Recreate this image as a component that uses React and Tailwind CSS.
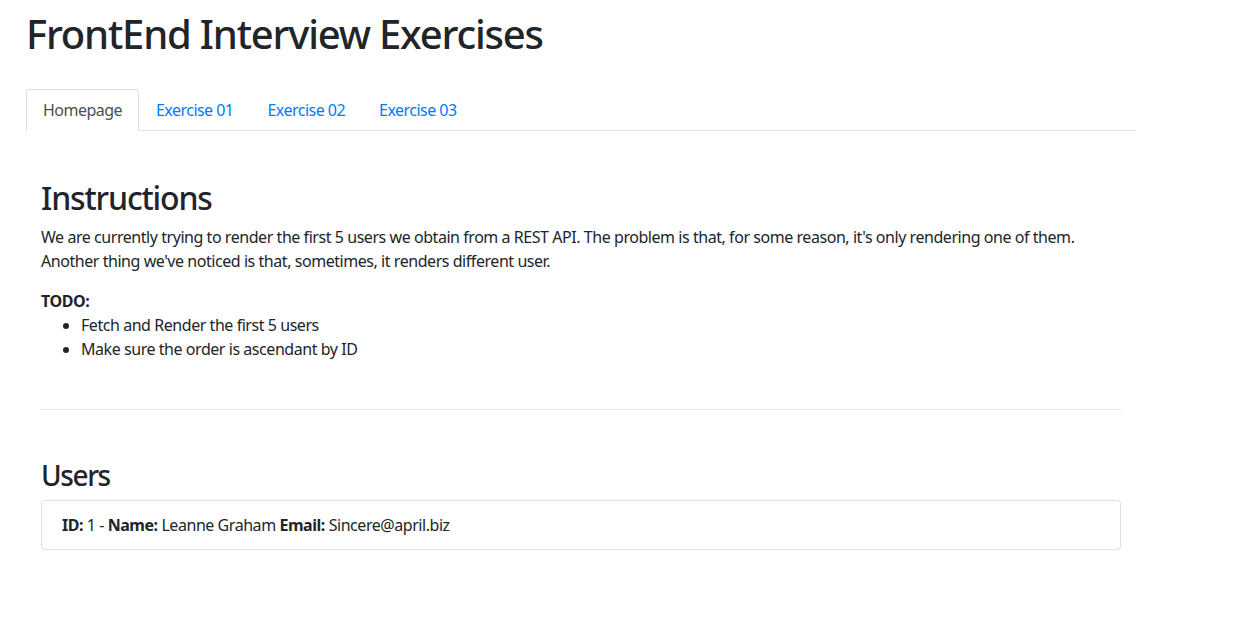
const users = [{ id: 1, name: 'Leanne Graham', email: 'Sincere@april.biz' }];

const tabs = ['Homepage', 'Exercise 01', 'Exercise 02', 'Exercise 03'];

export default function App() {
  return (
    <div className="min-h-screen bg-white text-[#212529] font-['Noto_Sans',sans-serif]">
      <div className="w-[1110px] ml-[26px]">
        <h1 className="pt-[10px] text-[40px] leading-[48px] font-medium tracking-[-0.03em]">FrontEnd Interview Exercises</h1>

        <ul className="mt-[31px] flex border-b border-[#dee2e6] tracking-[-0.033em]">
          {tabs.map((tab, i) => (
            <li key={tab} className="-mb-px">
              <a
                href="#"
                className={
                  i === 0
                    ? 'block px-4 py-2 text-base leading-6 text-[#495057] bg-white border border-[#dee2e6] border-b-white rounded-t'
                    : 'block px-4 py-2 text-base leading-6 text-[#007bff] border border-transparent'
                }
              >
                {tab}
              </a>
            </li>
          ))}
        </ul>

        <div className="px-[15px] pt-[48px] text-base leading-6 tracking-[-0.028em]">
          <h2 className="text-[32px] leading-[38px] font-medium mb-2 tracking-[-0.036em]">Instructions</h2>
          <p className="mb-4">
            We are currently trying to render the first 5 users we obtain from a REST API. The problem is that, for some reason, it's only rendering one of them. Another thing we've noticed is that, sometimes, it renders different user.
          </p>
          <strong className="block font-bold">TODO:</strong>
          <ul className="list-disc pl-10">
            <li>Fetch and Render the first 5 users</li>
            <li>Make sure the order is ascendant by ID</li>
          </ul>

          <hr className="mt-[48px] border-t border-[#e6e6e6]" />

          <h3 className="mt-[48px] text-[28px] leading-[34px] font-medium mb-2 tracking-[-0.05em]">Users</h3>
          <ul>
            {users.map((u) => (
              <li key={u.id} className="px-5 py-3 border border-[#dfdfdf] rounded">
                <strong>ID:</strong> {u.id} - <strong>Name:</strong> {u.name} <strong>Email:</strong> {u.email}
              </li>
            ))}
          </ul>
        </div>
      </div>
    </div>
  );
}
